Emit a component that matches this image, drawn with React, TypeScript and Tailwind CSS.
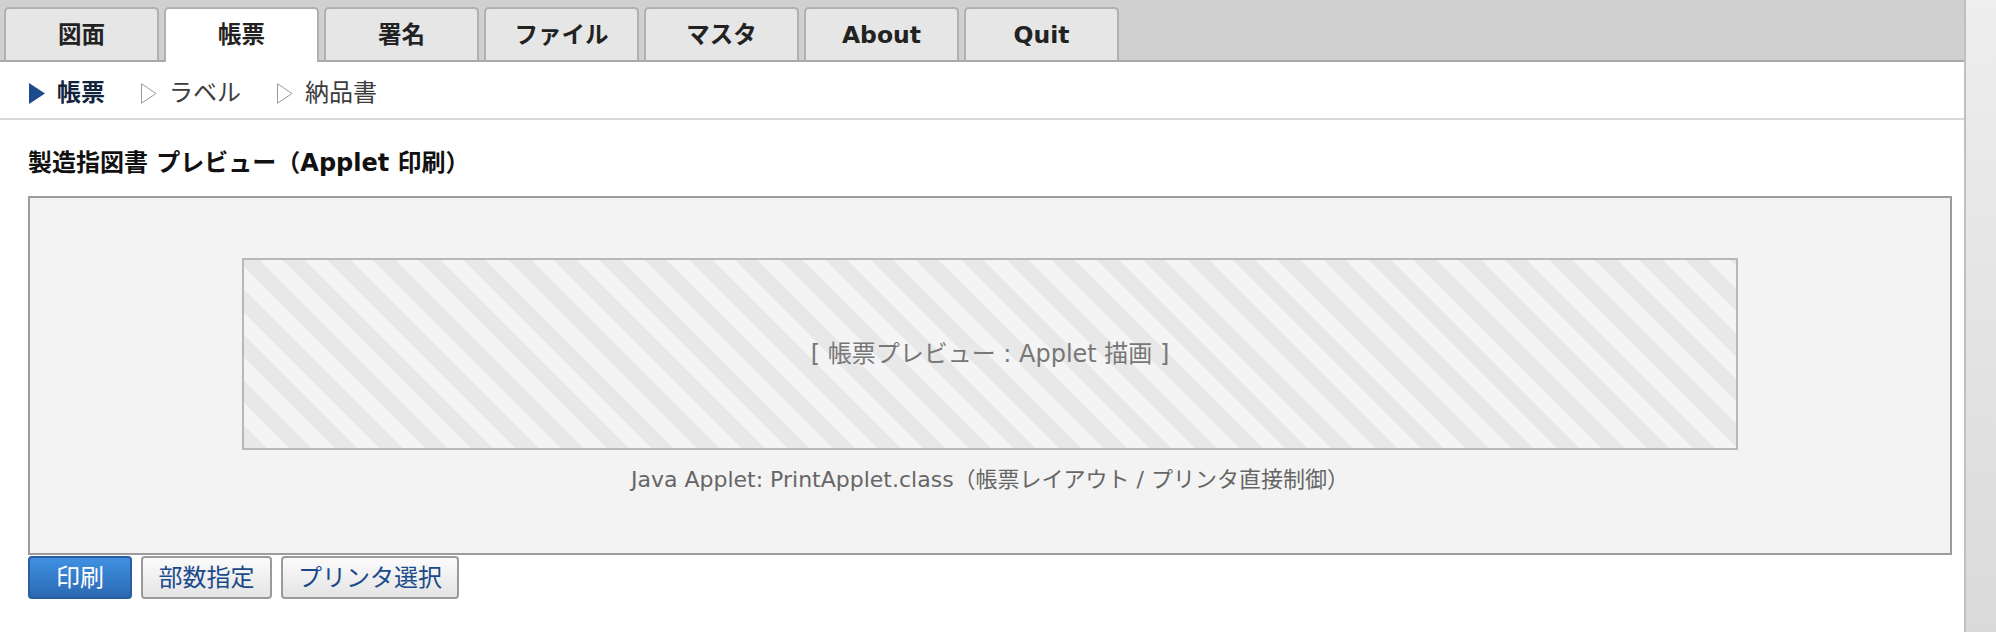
import * as React from "react";

const tabs = ["図面", "帳票", "署名", "ファイル", "マスタ", "About", "Quit"];
const subs = [
  { label: "帳票", active: true },
  { label: "ラベル", active: false },
  { label: "納品書", active: false },
];

function Arrow({ active }: { active: boolean }) {
  return (
    <svg width="16" height="21" viewBox="0 0 16 21" aria-hidden>
      {active ? (
        <polygon points="0,0 16,10.5 0,21" fill="#1d4a8a" />
      ) : (
        <polygon points="0.5,0.8 15,10.5 0.5,20.2" fill="none" stroke="#9a9a9a" strokeWidth="1" />
      )}
    </svg>
  );
}

export default function App() {
  return (
    <div className="flex h-screen w-full bg-white font-['DejaVu_Sans','Noto_Sans_CJK_JP',sans-serif] text-[24px] text-[#222]">
      <div className="flex min-w-0 flex-1 flex-col">
        {/* tab bar */}
        <div className="flex h-[62px] items-end gap-[5px] border-b-2 border-[#a8a8a8] bg-[#d0d0d0] pl-[4px]">
          {tabs.map((t) => {
            const on = t === "帳票";
            return (
              <div
                key={t}
                className={`flex w-[155px] items-center justify-center rounded-t-[5px] border-2 border-b-0 border-[#b0b0b0] text-[23.5px] font-bold text-[#222] ${
                  on ? "relative z-10 -mb-[2px] h-[55px] bg-white" : "h-[53px] bg-[#e6e6e6] pt-[2px]"
                }`}
              >
                {t}
              </div>
            );
          })}
        </div>

        {/* sub nav */}
        <div className="flex h-[58px] items-center gap-[36px] border-b-2 border-[#d9d9d9] pl-[29px] pt-[6px]">
          {subs.map((s) => (
            <div key={s.label} className="flex items-center gap-[12px]">
              <Arrow active={s.active} />
              <span className={s.active ? "font-bold text-[#13243f]" : "text-[#3c3c3c]"}>{s.label}</span>
            </div>
          ))}
        </div>

        <div className="pl-[28px] pr-[12px]">
          <div className="flex h-[76px] items-center pt-[10px] font-bold text-[#111]">
            製造指図書 プレビュー（Applet 印刷）
          </div>

          <div className="flex h-[359px] flex-col items-center border-2 border-[#9c9c9c] bg-[#f3f3f3] pt-[60px]">
            <div className="flex h-[192px] w-[1496px] items-center justify-center border-2 border-[#b8b8b8] bg-[repeating-linear-gradient(45deg,#e8e8e8_0_16px,#f4f4f4_16px_32px)] text-[#777]">
              [ 帳票プレビュー : Applet 描画 ]
            </div>
            <div className="mt-[17px] text-[22px] leading-[26px] text-[#666]">
              Java Applet: PrintApplet.class（帳票レイアウト / プリンタ直接制御）
            </div>
          </div>

          <div className="mt-[1px] flex gap-[9px]">
            <button className="flex h-[43px] w-[104px] items-center justify-center rounded-[4px] border-2 border-[#2a5d9e] bg-gradient-to-b from-[#4091e2] to-[#2b69b2] text-white">
              印刷
            </button>
            <button className="flex h-[43px] w-[131px] items-center justify-center rounded-[4px] border-2 border-[#9a9a9a] bg-gradient-to-b from-[#fbfbfb] to-[#e4e4e4] text-[#1a4a8a]">
              部数指定
            </button>
            <button className="flex h-[43px] w-[178px] items-center justify-center rounded-[4px] border-2 border-[#9a9a9a] bg-gradient-to-b from-[#fbfbfb] to-[#e4e4e4] text-[#1a4a8a]">
              プリンタ選択
            </button>
          </div>
        </div>
      </div>

      {/* window scrollbar track */}
      <div className="w-[32px] shrink-0 border-l-2 border-[#c0c0c0] bg-gradient-to-b from-[#eeeeee] to-[#dadada]" />
    </div>
  );
}
